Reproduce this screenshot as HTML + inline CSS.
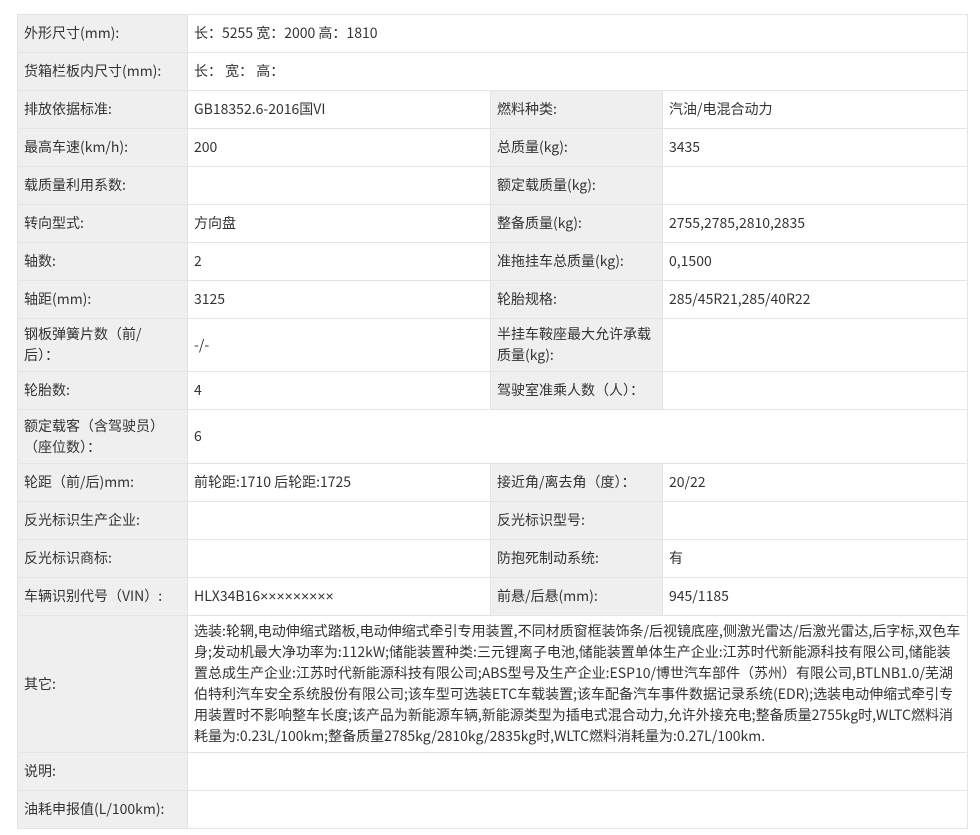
<!DOCTYPE html>
<html><head><meta charset="utf-8"><style>
body{margin:0;background:#fff;width:980px;height:835px;overflow:hidden;font-family:"Noto Sans CJK SC","Liberation Sans",sans-serif;font-size:14px;color:#333}
.c{position:absolute;box-sizing:border-box;border:1px solid #e4e4e4;display:flex;align-items:center;padding:0 6px;line-height:21px;background:#fff}
.l{background:#efefef}
.x{font-family:"Liberation Sans",sans-serif}
</style></head><body>
<div id="t"></div>
<script>
var rows=[
[14,38,["外形尺寸(mm):","长：5255 宽：2000 高：1810"]],
[52,38,["货箱栏板内尺寸(mm):","长：&nbsp;宽：&nbsp;高："]],
[90,38,["排放依据标准:","GB18352.6-2016国VI","燃料种类:","汽油/电混合动力"]],
[128,38,["最高车速(km/h):","200","总质量(kg):","3435"]],
[166,38,["载质量利用系数:","","额定载质量(kg):",""]],
[204,38,["转向型式:","方向盘","整备质量(kg):","2755,2785,2810,2835"]],
[242,38,["轴数:","2","准拖挂车总质量(kg):","0,1500"]],
[280,38,["轴距(mm):","3125","轮胎规格:","285/45R21,285/40R22"]],
[318,53,["钢板弹簧片数（前/<br>后）：","-/-","半挂车鞍座最大允许承载质量(kg):",""]],
[371,38,["轮胎数:","4","驾驶室准乘人数（人）：",""]],
[409,54,["额定载客（含驾驶员）<br>（座位数）：","6"]],
[463,38,["轮距（前/后)mm:","前轮距:1710 后轮距:1725","接近角/离去角（度）：","20/22"]],
[501,38,["反光标识生产企业:","","反光标识型号:",""]],
[539,38,["反光标识商标:","","防抱死制动系统:","有"]],
[577,38,["车辆识别代号（VIN）:","HLX34B16<span class=\"x\">×××××××××</span>","前悬/后悬(mm):","945/1185"]],
[615,137,["其它:","选装:轮辋,电动伸缩式踏板,电动伸缩式牵引专用装置,不同材质窗框装饰条/后视镜底座,侧激光雷达/后激光雷达,后字标,双色车身;发动机最大净功率为:112kW;储能装置种类:三元锂离子电池,储能装置单体生产企业:江苏时代新能源科技有限公司,储能装置总成生产企业:江苏时代新能源科技有限公司;ABS型号及生产企业:ESP10/博世汽车部件（苏州）有限公司,BTLNB1.0/芜湖伯特利汽车安全系统股份有限公司;该车型可选装ETC车载装置;该车配备汽车事件数据记录系统(EDR);选装电动伸缩式牵引专用装置时不影响整车长度;该产品为新能源车辆,新能源类型为插电式混合动力,允许外接充电;整备质量2755kg时,WLTC燃料消耗量为:0.23L/100km;整备质量2785kg/2810kg/2835kg时,WLTC燃料消耗量为:0.27L/100km."]],
[752,38,["说明:",""]],
[790,38,["油耗申报值(L/100km):",""]]
];
var h="";
rows.forEach(function(r){
 var y=r[0],ht=r[1]+1,c=r[2];
 var xs=c.length==4?[17,187,490,662,967]:[17,187,967];
 for(var i=0;i<c.length;i++){
  h+='<div class="c'+(i%2==0?' l':'')+'" style="left:'+xs[i]+'px;top:'+y+'px;width:'+(xs[i+1]-xs[i]+1)+'px;height:'+ht+'px">'+(c[i]?'<div>'+c[i]+'</div>':'')+'</div>';
 }
});
document.getElementById("t").innerHTML=h;
</script>
</body></html>
